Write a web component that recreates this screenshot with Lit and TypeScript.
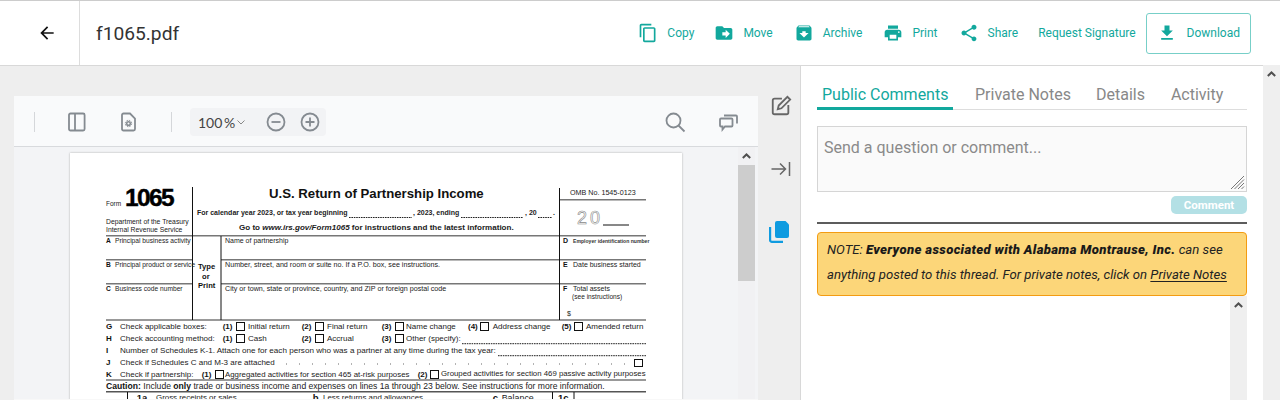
import { LitElement, html, css, svg } from "lit";
import { customElement } from "lit/decorators.js";

type T = [number, number, number, string, string?];
// Form sheet text: x, top y (screenshot coords), font size, markup, class
const texts: T[] = [
  [106, 200, 6.5, "Form"],
  [125, 184, 24.5, "1065", "num"],
  [106, 218, 6.8, "Department of the Treasury"],
  [106, 226, 6.8, "Internal Revenue Service"],
  [269, 186.4, 13.2, "U.S. Return of Partnership Income", "b"],
  [197, 208.7, 7, "For calendar year 2023, or tax year beginning", "sb"],
  [413, 208.7, 7, ", 2023, ending", "sb"],
  [525, 208.7, 7, ", 20", "sb"],
  [553, 208.7, 7, ".", "sb"],
  [239, 222.7, 8.05, "Go to <i>www.irs.gov/Form1065</i> for instructions and the latest information.", "sb"],
  [570, 189.2, 7.16, "OMB No. 1545-0123"],
  [106, 236.9, 6.65, "<b class='k9'>A</b>Principal business activity"],
  [106, 260.9, 6.65, "<b class='k9'>B</b>Principal product or service"],
  [106, 284.9, 6.65, "<b class='k9'>C</b>Business code number"],
  [225, 236.9, 7, "Name of partnership"],
  [225, 260.9, 7.17, "Number, street, and room or suite no. If a P.O. box, see instructions."],
  [225, 284.9, 7.17, "City or town, state or province, country, and ZIP or foreign postal code"],
  [563, 236.9, 7, "<b class='k10'>D</b><span class='narrow'>Employer identification number</span>"],
  [563, 260.9, 7, "<b class='k10'>E</b>Date business started"],
  [563, 284.9, 7, "<b class='k10'>F</b>Total assets"],
  [572, 293, 6.6, "(see instructions)"],
  [567, 310, 7, "$"],
  [198, 263.3, 7.6, "Type", "b"],
  [202, 273, 7.6, "or", "b"],
  [198, 282.3, 7.6, "Print", "b"],
  [106, 322.4, 8, "<b>G</b>"], [120, 322.4, 8, "Check applicable boxes:"],
  [222.7, 322.4, 8, "<b>(1)</b>"], [248, 322.4, 8, "Initial return"],
  [301.7, 322.4, 8, "<b>(2)</b>"], [327, 322.4, 8, "Final return"],
  [381.7, 322.4, 8, "<b>(3)</b>"], [406, 322.4, 8, "Name change"],
  [468, 322.4, 8, "<b>(4)</b>"], [492.7, 322.4, 8, "Address change"],
  [561.7, 322.4, 8, "<b>(5)</b>"], [586, 322.4, 8, "Amended return"],
  [106, 334.4, 8, "<b>H</b>"], [120, 334.4, 8, "Check accounting method:"],
  [222.7, 334.4, 8, "<b>(1)</b>"], [248, 334.4, 8, "Cash"],
  [301.7, 334.4, 8, "<b>(2)</b>"], [327, 334.4, 8, "Accrual"],
  [381.7, 334.4, 8, "<b>(3)</b>"], [406, 334.4, 8, "Other (specify):"],
  [106, 346.4, 8, "<b>I</b>"], [120, 346.4, 8.1, "Number of Schedules K-1. Attach one for each person who was a partner at any time during the tax year:"],
  [106, 358.4, 8, "<b>J</b>"], [120, 358.4, 8, "Check if Schedules C and M-3 are attached"],
  [106, 370, 8, "<b>K</b>"], [120, 370, 8, "Check if partnership:"],
  [201.7, 370, 8, "<b>(1)</b>"], [225, 370, 7.85, "Aggregated activities for section 465 at-risk purposes"],
  [417.7, 370, 8, "<b>(2)</b>"], [441, 370, 7.8, "Grouped activities for section 469 passive activity purposes"],
  [106, 381.7, 8.6, "<b>Caution:</b> Include <b>only</b> trade or business income and expenses on lines 1a through 23 below. See instructions for more information."],
  [136.7, 393, 9.5, "<b>1a</b>"], [156, 393.2, 7.9, "Gross receipts or sales"],
  [312.7, 393, 9.5, "<b>b</b>"], [323, 393.2, 7.9, "Less returns and allowances"],
  [492.7, 393, 9.5, "<b>c</b>"], [501.7, 393, 8.9, "Balance"],
  [558, 393, 9.5, "<b>1c</b>"],
];

// x1, y1, x2, y2, stroke width, colour
type L = [number, number, number, number, number, string];
const G = "#777";
const K = "#111";
const lines: L[] = [
  [559, 199.7, 646, 199.7, 1.6, G],
  [106, 235.7, 646, 235.7, 1.6, G],
  [106, 259.7, 192, 259.7, 1.6, G],
  [221, 259.7, 646, 259.7, 1.6, G],
  [106, 283.7, 192, 283.7, 1.6, G],
  [221, 283.7, 646, 283.7, 1.6, G],
  [106, 320, 646, 320, 1.6, G],
  [106, 380, 646, 380, 1.6, G],
  [106, 391.7, 646, 391.7, 1.4, "#555"],
  [192.5, 187, 192.5, 320, 1, K],
  [221, 236, 221, 320, 1, K],
  [559.5, 188, 559.5, 320, 1, K],
  [127.5, 392, 127.5, 400, 1, K],
  [552.5, 392, 552.5, 400, 1, K],
  [574, 392, 574, 400, 1, K],
  [603, 225, 629, 225, 1, K],
];
const dashes: L[] = [
  [349, 217.5, 412, 217.5, 1, "#222"],
  [461, 217.5, 523, 217.5, 1, "#222"],
  [538, 217.5, 552, 217.5, 1, "#222"],
  [462, 343.7, 646, 343.7, 1, "#222"],
  [498, 355.7, 646, 355.7, 1, "#222"],
];
const boxes: [number, number][] = [
  [236, 322.3], [315, 322.3], [395, 322.3], [480, 322.3], [574, 322.3],
  [236, 334.3], [315, 334.3], [395, 334.3],
  [634, 358.5],
  [215, 370.3], [430, 370.3],
];

const ARROW = svg`<path d="M20 11H7.83l5.59-5.59L12 4l-8 8 8 8 1.41-1.41L7.83 13H20z"/>`;
const COPY = svg`<path d="M16 1H4c-1.1 0-2 .9-2 2v14h2V3h12V1zm3 4H8c-1.1 0-2 .9-2 2v14c0 1.1.9 2 2 2h11c1.1 0 2-.9 2-2V7c0-1.1-.9-2-2-2zm0 16H8V7h11v14z"/>`;
const MOVE = svg`<path d="M20 6h-8l-2-2H4c-1.1 0-1.99.9-1.99 2L2 18c0 1.1.9 2 2 2h16c1.1 0 2-.9 2-2V8c0-1.1-.9-2-2-2zm-6 12v-3h-4v-4h4V8l5 5-5 5z"/>`;
const ARCHIVE = svg`<path d="M20.54 5.23l-1.39-1.68C18.88 3.21 18.47 3 18 3H6c-.47 0-.88.21-1.16.55L3.46 5.23C3.17 5.57 3 6.02 3 6.5V19c0 1.1.9 2 2 2h14c1.1 0 2-.9 2-2V6.5c0-.48-.17-.93-.46-1.27zM12 17.5L6.5 12H10v-2h4v2h3.5L12 17.5zM5.12 5l.81-1h12l.94 1H5.12z"/>`;
const PRINT = svg`<path d="M19 8H5c-1.66 0-3 1.34-3 3v6h4v4h12v-4h4v-6c0-1.66-1.34-3-3-3zm-3 11H8v-5h8v5zm3-7c-.55 0-1-.45-1-1s.45-1 1-1 1 .45 1 1-.45 1-1 1zm-1-9H6v4h12V3z"/>`;
const SHARE = svg`<path d="M18 16.08c-.76 0-1.44.3-1.96.77L8.91 12.7c.05-.23.09-.46.09-.7s-.04-.47-.09-.7l7.05-4.11c.54.5 1.25.81 2.04.81 1.66 0 3-1.34 3-3s-1.34-3-3-3-3 1.34-3 3c0 .24.04.47.09.7L8.04 9.81C7.5 9.31 6.79 9 6 9c-1.66 0-3 1.34-3 3s1.34 3 3 3c.79 0 1.5-.31 2.04-.81l7.12 4.16c-.05.21-.08.43-.08.65 0 1.61 1.31 2.92 2.92 2.92 1.61 0 2.92-1.31 2.92-2.92s-1.31-2.92-2.92-2.92z"/>`;
const DOWNLOAD = svg`<path d="M19 9h-4V3H9v6H5l7 7 7-7zM5 18v2h14v-2H5z"/>`;

const ACTIONS = [
  ["Copy", COPY],
  ["Move", MOVE],
  ["Archive", ARCHIVE],
  ["Print", PRINT],
  ["Share", SHARE],
] as const;

const UP = svg`<path d="M.8 5 4.5 1.500 8.200 5"/>`;

@customElement("app-root")
export class AppRoot extends LitElement {
  static styles = css`
    :host { display: block; width: 1280px; height: 400px; overflow: hidden; font-family: Roboto, "Liberation Sans", sans-serif; background: #eee; }
    svg { display: block; }
    .top { display: flex; align-items: center; height: 64px; background: #fff; border-top: 1px solid #ccc; border-bottom: 1px solid #d8d8d8; }
    .back { height: 100%; display: flex; align-items: center; justify-content: center; border-right: 1px solid #ddd; flex: none; padding-left: 14px; width: 65px; }
    .back svg { width: 20px; height: 20px; fill: #111; }
    .name { font-size: 19.2px; color: #333; margin-left: 16px; flex: 1; }
    .actions { display: flex; align-items: center; color: #12a89d; font-size: 12px; margin-right: 29px; }
    .act { display: flex; align-items: center; gap: 9px; margin-right: 20px; }
    .act:nth-child(2) { margin-right: 21px; }
    .act:nth-child(3) { margin-right: 21px; }
    .act:nth-child(4) { margin-right: 21px; }
    .act svg { width: 20px; height: 20px; fill: #12a89d; }
    .dl { display: flex; align-items: center; gap: 10px; height: 41px; box-sizing: border-box; padding: 0 10px; border: 1px solid #77cfc8; border-radius: 3px; margin-left: -10px; }
    .dl svg { width: 20px; height: 20px; fill: #12a89d; }
    .body { display: flex; height: 334px; }
    .viewer { width: 744px; margin: 30px 0 0 14px; flex: none; background: #f3f4f6; position: relative; overflow: hidden; height: 304px; }
    .tb { height: 51px; box-sizing: border-box; padding-top: 2px; background: #f9fafb; border-bottom: 1px solid #d8dadd; display: flex; align-items: center; position: relative; }
    .sep { width: 1px; height: 20px; background: #d5d7da; flex: none; }
    .sep.a { margin-left: 20px; }
    .ti { fill: none; stroke: #858b91; stroke-width: 1.8; width: 22px; height: 22px; flex: none; }
    .i-panel { margin-left: 31px; }
    .i-file { margin-left: 30px; margin-right: 31px; }
    .i-search { margin-right: 31px; }
    .i-comment { margin-right: 19px; }
    .gear { stroke-width: 1.500; }
    .gearo { stroke-width: 1; stroke-dasharray: 1.500 1; }
    .zoom { display: flex; align-items: center; height: 28px; background: #f2f3f5; border-radius: 4px; margin-left: 18px; padding-left: 8px; width: 136px; box-sizing: border-box; font-family: Lato, Roboto, sans-serif; font-size: 14px; color: #444; flex: none; }
    .pct { width: 39px; white-space: nowrap; word-spacing: -2px; flex: none; }
    .chev { width: 8px; height: 8px; fill: none; stroke: #888; stroke-width: 1; margin-right: 20px; flex: none; }
    .zoom .ti { margin-right: 12px; }
    .grow { flex: 1; }
    .page { position: absolute; left: 56px; top: 57px; width: 612px; height: 300px; background: #fff; box-shadow: 0 0 2px rgba(0,0,0,.3); font-family: "Liberation Sans", Arial, sans-serif; color: #222; overflow: hidden; }
    .ft { position: absolute; white-space: nowrap; line-height: 1.15; }
    .ft b { font-weight: 700; color: #111; }
    .ft b.k9 { display: inline-block; width: 9px; }
    .ft b.k10 { display: inline-block; width: 10px; }
    .ft.b { font-weight: 700; color: #111; }
    .ft.sb { font-weight: 700; color: #222; }
    .ft.num { font-weight: 700; color: #000; letter-spacing: -1.6px; -webkit-text-stroke: .4px #000; }
    .narrow { font-size: 5.1px; font-weight: 700; color: #333; }
    .sheet { position: absolute; left: 0; top: 0; pointer-events: none; }
    .twenty { position: absolute; left: 507px; top: 54.7px; font-size: 18px; color: #fff; -webkit-text-stroke: .6px #888; white-space: nowrap; letter-spacing: 3px; }
    .check { position: absolute; width: 8.500px; height: 8.500px; box-sizing: border-box; border: 1.300px solid #111; }
    .cut { position: absolute; left: 0; right: 0; bottom: 0; height: 1px; background: #f8f8f8; }
    .vbar { position: absolute; right: 3px; top: 51px; width: 17px; bottom: 0; background: #f1f1f3; }
    .vup { height: 18px; display: flex; align-items: center; justify-content: center; }
    .vup svg, .up svg { width: 9px; height: 6px; fill: none; stroke: #505050; stroke-width: 2; }
    .thumb { width: 17px; height: 116px; background: #cdcdcd; }
    .rail { width: 42px; flex: none; display: flex; flex-direction: column; align-items: center; padding-top: 29px; box-sizing: border-box; }
    .r1 { width: 22px; height: 22px; fill: none; stroke: #666; stroke-width: 2; margin-left: 4px; flex: none; }
    .r2 { width: 22px; height: 22px; fill: none; stroke: #666; stroke-width: 1.500; margin-top: 41px; margin-left: 4px; flex: none; }
    .r3 { width: 24px; height: 24px; margin-top: 40px; margin-left: 2px; flex: none; }
    .panel { flex: 1; background: #fff; border-left: 1px solid #d8d8d8; display: flex; min-width: 0; }
    .content { flex: 1; padding: 13px 16px 0; min-width: 0; position: relative; }
    .tabs { display: flex; border-bottom: 1px solid #ddd; height: 31px; box-sizing: border-box; font-size: 16px; color: #888; }
    .tab { padding: 6px 0 0; }
    .tab.on { color: #12a89d; border-bottom: 3px solid #12a89d; height: 31px; box-sizing: border-box; padding: 6px 5px 0; margin-right: 22px; width: 136px; white-space: nowrap; }
    .t2 { margin-right: 25px; }
    .t3 { margin-right: 26px; }
    .ta { margin-top: 16px; height: 66px; box-sizing: border-box; border: 1px solid #d5d5d5; background: #fafafa; color: #8a8a8a; font-size: 16px; padding: 11px 6px; position: relative; }
    .grip { position: absolute; right: 1px; bottom: 1px; width: 15px; height: 15px; }
    .btnrow { display: flex; justify-content: flex-end; margin-top: 4px; }
    .btn { width: 76px; height: 18px; border-radius: 5px; background: #b3e0e5; color: #fff; font-size: 11.500px; font-weight: 700; display: flex; align-items: center; justify-content: center; }
    .hr { height: 2px; background: #5c5c5c; margin-top: 8px; }
    .note { margin-top: 8px; height: 64px; box-sizing: border-box; border: 1px solid #f39c12; border-radius: 4px; background: #fcd679; padding: 4px 9px; font-size: 13.150px; line-height: 25px; font-style: italic; color: #222; white-space: nowrap; }
    .note b { font-weight: 900; color: #1a1a1a; letter-spacing: .33px; }
    .note u { text-underline-offset: 2px; }
    .inner { position: absolute; right: 16px; top: 230px; bottom: 0; width: 17px; background: #efefef; }
    .up { height: 17px; display: flex; align-items: center; justify-content: center; }
    .scroll { width: 17px; flex: none; background: #efefef; margin-top: -1px; }
  `;

  render() {
    return html`
      <div class="top">
        <div class="back"><svg viewBox="0 0 24 24">${ARROW}</svg></div>
        <div class="name">f1065.pdf</div>
        <div class="actions">
          ${ACTIONS.map(([label, icon]) => html`<div class="act"><svg viewBox="0 0 24 24">${icon}</svg><span>${label}</span></div>`)}
          <div class="act"><span>Request Signature</span></div>
          <div class="dl"><svg viewBox="0 0 24 24">${DOWNLOAD}</svg><span>Download</span></div>
        </div>
      </div>
      <div class="body">
        <div class="viewer">
          <div class="tb">
            <div class="sep a"></div>
            <svg class="ti i-panel" viewBox="0 0 22 22"><rect x="3" y="2.500" width="15.600" height="17" rx="1.500"/><path d="M9 2.500v17"/></svg>
            <svg class="ti i-file" viewBox="0 0 22 22"><path d="M5.500 2.500H12l5 5V18a1.500 1.500 0 0 1-1.500 1.500h-10A1.500 1.500 0 0 1 4 18V4a1.500 1.500 0 0 1 1.500-1.500z"/><circle class="gear" cx="10.500" cy="12.500" r="1.800"/><circle class="gearo" cx="10.500" cy="12.500" r="3.200"/></svg>
            <div class="sep"></div>
            <div class="zoom">
              <span class="pct">100 %</span>
              <svg class="chev" viewBox="0 0 8 8"><path d="M.5 2.500 4 6l3.500-3.500"/></svg>
              <svg class="ti" viewBox="0 0 22 22"><circle cx="11" cy="11" r="8.500"/><path d="M6.500 11h9"/></svg>
              <svg class="ti" viewBox="0 0 22 22"><circle cx="11" cy="11" r="8.500"/><path d="M6.500 11h9M11 6.500v9"/></svg>
            </div>
            <div class="grow"></div>
            <svg class="ti i-search" viewBox="0 0 22 22"><circle cx="9.500" cy="9.500" r="7"/><path d="m14.500 14.500 6 6"/></svg>
            <svg class="ti i-comment" viewBox="0 0 22 22"><path d="M3 8.500a1 1 0 0 1 1-1h10.500a1 1 0 0 1 1 1v6a1 1 0 0 1-1 1H8l-2.500 3v-3H4a1 1 0 0 1-1-1z"/><path d="M7 4.500h12a1 1 0 0 1 1 1v7"/></svg>
          </div>
          <div class="page">
            <svg class="sheet" width="612" height="300" viewBox="70 153 612 300">
              ${lines.map(([a, b, c, d, w, col]) => svg`<line x1=${a} y1=${b} x2=${c} y2=${d} stroke=${col} stroke-width=${w} />`)}
              ${dashes.map(([a, b, c, d, w, col]) => svg`<line x1=${a} y1=${b} x2=${c} y2=${d} stroke=${col} stroke-width=${w} stroke-dasharray="1.600 .8" />`)}
              <line x1="286" y1="364" x2="628" y2="364" stroke="#666" stroke-width="1" stroke-dasharray="1 12" />
            </svg>
            ${texts.map(([x, y, s, t, c]) => html`<div class="ft ${c ?? ""}" style="left:${x - 70}px;top:${y - 153}px;font-size:${s}px" .innerHTML=${t}></div>`)}
            ${boxes.map(([x, y]) => html`<div class="check" style="left:${x - 70}px;top:${y - 153}px"></div>`)}
            <div class="twenty">20</div>
          </div>
          <div class="vbar">
            <div class="vup"><svg viewBox="0 0 9 6">${UP}</svg></div>
            <div class="thumb"></div>
          </div>
          <div class="cut"></div>
        </div>
        <div class="rail">
          <svg class="r1" viewBox="0 0 24 24"><path d="M13 4H5a2 2 0 0 0-2 2v13a2 2 0 0 0 2 2h13a2 2 0 0 0 2-2v-8"/><path d="M8.500 15.500l1-4L19 2l3 3-9.500 9.500z"/></svg>
          <svg class="r2" viewBox="0 0 22 22"><path d="M1.500 11h14M10 5.500l5.500 5.500L10 16.500M19.500 4v14"/></svg>
          <svg class="r3" viewBox="0 0 24 24"><path fill="#0f9be0" d="M9 1h8.500L21 4.500V16a2 2 0 0 1-2 2H9a2 2 0 0 1-2-2V3a2 2 0 0 1 2-2z"/><path fill="none" stroke="#0f9be0" stroke-width="2.200" d="M2.100 7v13a1.800 1.800 0 0 0 1.800 1.900H15"/></svg>
        </div>
        <div class="panel">
          <div class="content">
            <div class="tabs">
              <div class="tab on">Public Comments</div>
              <div class="tab t2">Private Notes</div>
              <div class="tab t3">Details</div>
              <div class="tab">Activity</div>
            </div>
            <div class="ta">Send a question or comment...
              <svg class="grip" viewBox="0 0 15 15"><path d="M14 1 1 14M14 4.500 4.500 14M14 8l-6 6M14 11.500 11.500 14" stroke="#777" stroke-width="1"/></svg>
            </div>
            <div class="btnrow"><div class="btn">Comment</div></div>
            <div class="hr"></div>
            <div class="note">NOTE: <b>Everyone associated with Alabama Montrause, Inc.</b> can see<br/>anything posted to this thread. For private notes, click on <u>Private Notes</u></div>
            <div class="inner"><div class="up"><svg viewBox="0 0 9 6">${UP}</svg></div></div>
          </div>
          <div class="scroll"><div class="up"><svg viewBox="0 0 9 6">${UP}</svg></div></div>
        </div>
      </div>
    `;
  }
}
